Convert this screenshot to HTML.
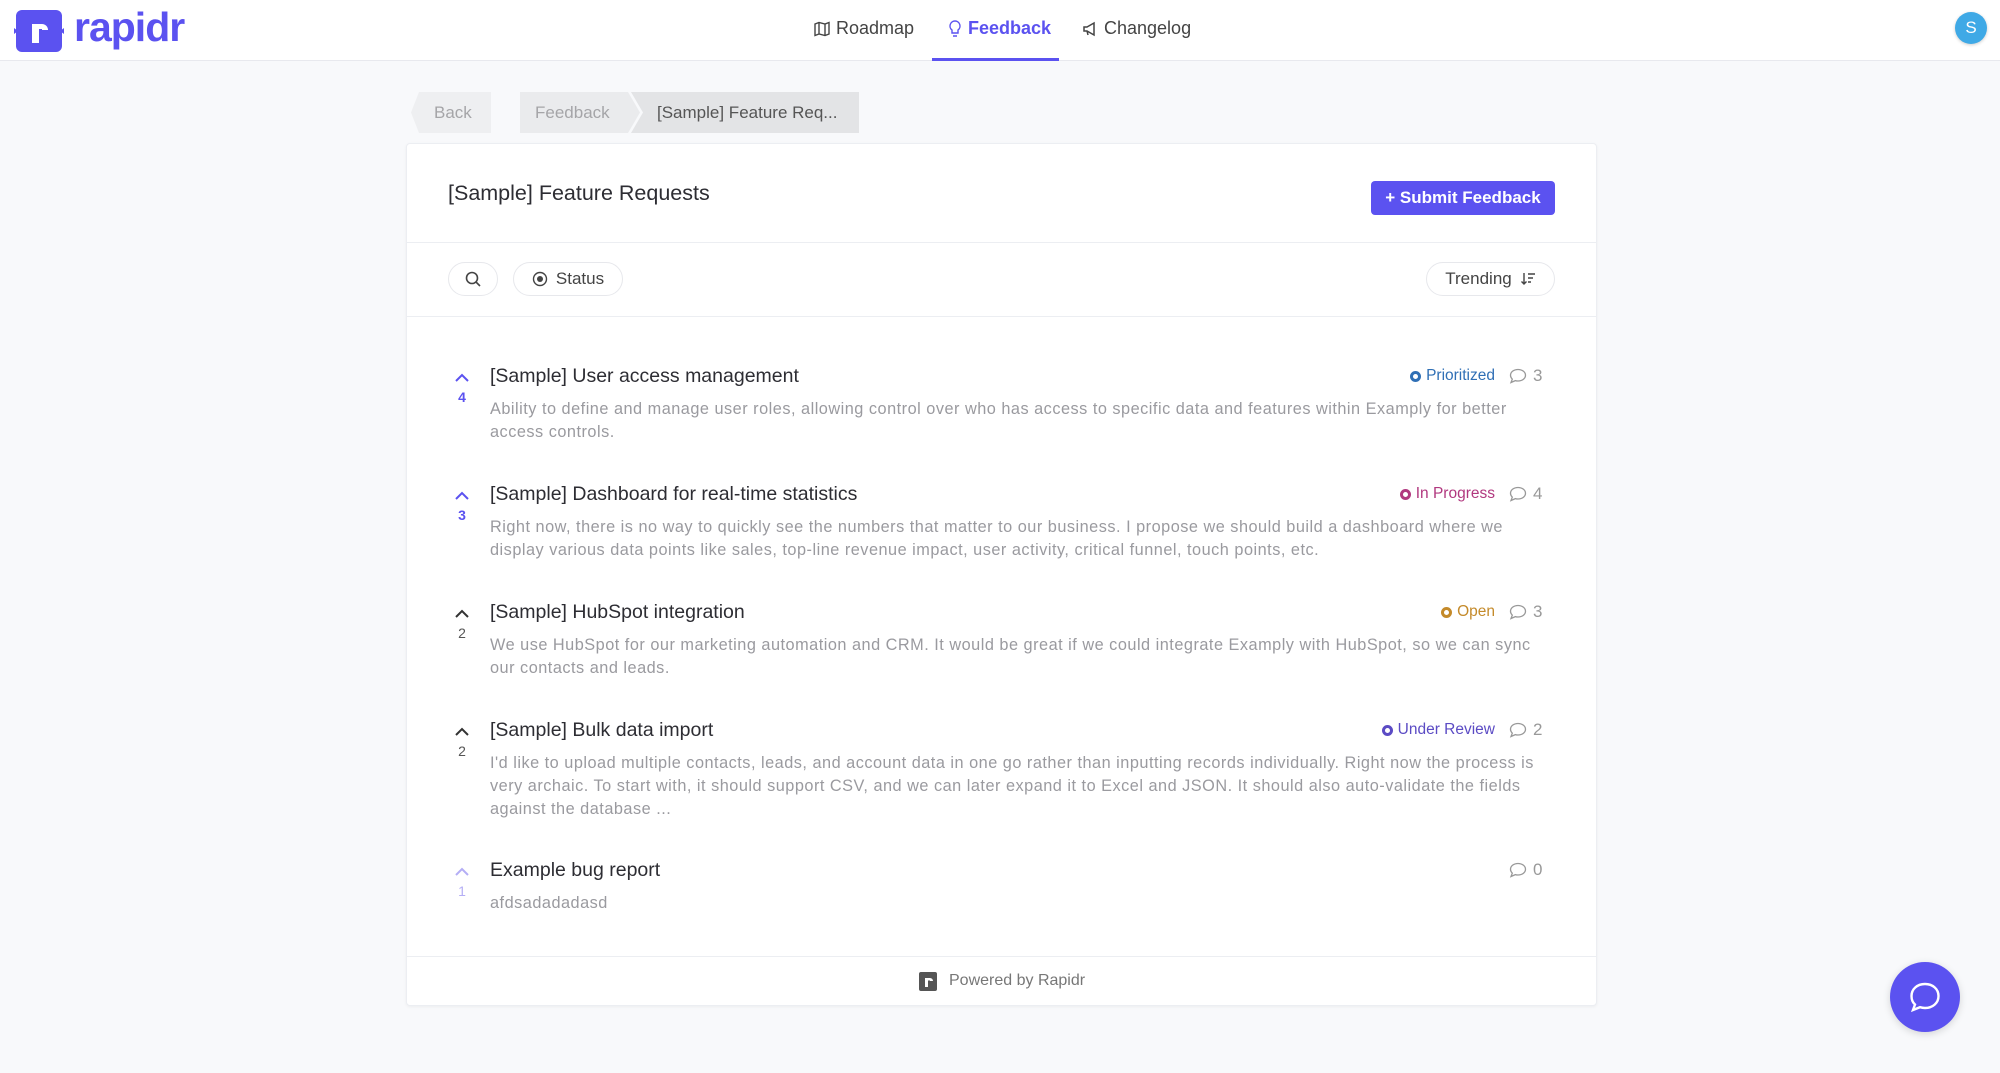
<!DOCTYPE html>
<html><head><meta charset="utf-8"><style>
*{box-sizing:border-box;margin:0;padding:0}
body{width:2000px;height:1073px;background:#f8f9fb;font-family:"Liberation Sans",sans-serif;position:relative;overflow:hidden;color:#333}
.abs{position:absolute}
.hdr{left:0;top:0;width:2000px;height:61px;background:#fff;border-bottom:1px solid #e8e9ee}
.nav{font-size:18px;color:#444;top:18px;display:flex;align-items:center;gap:6px}
.card{left:406px;top:143px;width:1191px;height:863px;background:#fff;border:1px solid #eceef2;border-radius:4px;box-shadow:0 1px 3px rgba(0,0,0,.05)}
.pill{border:1px solid #e7e8ec;border-radius:20px;height:34px;display:flex;align-items:center;justify-content:center;font-size:17px;color:#444;gap:8px}
.title{left:490px;font-size:19.5px;color:#2d2d33}
.desc{left:490px;width:1065px;font-size:16.3px;letter-spacing:.5px;line-height:23px;color:#9a9a9f}
.vote{left:450px;width:24px;text-align:center;font-size:14px;font-weight:bold}
.st{font-size:15.5px;display:flex;align-items:center;gap:5px;justify-content:flex-end;right:505px}
.st i{display:inline-block;width:11px;height:11px;border:3px solid;border-radius:50%}
.cm{left:1509px;font-size:17px;color:#999;display:flex;align-items:center;gap:6px}
</style></head><body>
<div class="abs hdr"></div>
<svg class="abs" style="left:14px;top:10px" width="50" height="42" viewBox="0 0 50 42"><rect x="2" y="0" width="46" height="42" rx="6" fill="#5b52f0"/><path d="M0 18 L4 21 L0 24Z M50 18 L46 21 L50 24Z" fill="#5b52f0"/><path d="M18 33 V14 h10 a6 6 0 0 1 6 6 h-6 v-1 h-3 v14z" fill="#fff"/></svg>
<div class="abs" style="left:74px;top:4px;font-size:41px;font-weight:bold;color:#5b52f0;letter-spacing:-1px">rapidr</div>
<div class="abs nav" style="left:814px"><svg width="16" height="16" viewBox="0 0 16 16" fill="none" stroke="#444" stroke-width="1.4"><path d="M1 3l4-1.5 6 1.5 4-1.5v11.5l-4 1.5-6-1.5-4 1.5z M5 1.5v11.5 M11 3v11.5"/></svg>Roadmap</div>
<div class="abs nav" style="left:948px;color:#5b52f0;font-weight:bold"><svg width="14" height="18" viewBox="0 0 14 18" fill="none" stroke="#5b52f0" stroke-width="1.4"><path d="M7 1a5 5 0 0 0-3 9v3h6v-3a5 5 0 0 0-3-9z M5 16h4"/></svg>Feedback</div>
<div class="abs" style="left:932px;top:58px;width:127px;height:3px;background:#5b52f0"></div>
<div class="abs nav" style="left:1082px"><svg width="16" height="16" viewBox="0 0 16 16" fill="none" stroke="#444" stroke-width="1.5"><path d="M2 6v4h3l7 4V2L5 6z M5 10l1 4"/></svg>Changelog</div>
<div class="abs" style="left:1955px;top:12px;width:32px;height:32px;border-radius:50%;background:#3fa9e6;color:#fff;font-size:17px;text-align:center;line-height:32px;box-shadow:0 1px 3px rgba(0,0,0,.2)">S</div>

<div class="abs" style="left:411px;top:92px;width:80px;height:41px;background:#eeeff1;clip-path:polygon(8px 0,100% 0,100% 100%,8px 100%,0 50%);color:#a5a5a8;font-size:17px;line-height:41px;padding-left:23px">Back</div>
<div class="abs" style="left:520px;top:92px;width:120px;height:41px;background:#eaebed;clip-path:polygon(0 0,calc(100% - 12px) 0,100% 50%,calc(100% - 12px) 100%,0 100%);color:#a5a5a8;font-size:17px;line-height:41px;padding-left:15px">Feedback</div>
<div class="abs" style="left:631px;top:92px;width:228px;height:41px;background:#e3e4e6;clip-path:polygon(0 0,100% 0,100% 100%,0 100%,12px 50%);color:#555;font-size:17px;line-height:41px;padding-left:26px">[Sample] Feature Req...</div>

<div class="abs card"></div>
<div class="abs" style="left:448px;top:181px;font-size:21.5px;color:#2d2d33">[Sample] Feature Requests</div>
<div class="abs" style="left:1371px;top:181px;width:184px;height:34px;background:#5b52f0;border-radius:4px;color:#fff;font-size:17px;font-weight:bold;line-height:34px;text-align:center">+ Submit Feedback</div>
<div class="abs" style="left:407px;top:242px;width:1189px;height:1px;background:#eceef2"></div>
<div class="abs pill" style="left:448px;top:262px;width:50px"><svg width="18" height="18" viewBox="0 0 18 18" fill="none" stroke="#444" stroke-width="1.6"><circle cx="8" cy="8" r="5.5"/><path d="M12 12l4 4"/></svg></div>
<div class="abs pill" style="left:513px;top:262px;width:110px"><svg width="16" height="16" viewBox="0 0 16 16"><circle cx="8" cy="8" r="6.5" fill="none" stroke="#444" stroke-width="1.4"/><circle cx="8" cy="8" r="3" fill="#444"/></svg>Status</div>
<div class="abs pill" style="left:1426px;top:262px;width:129px">Trending <svg width="16" height="16" viewBox="0 0 16 16" fill="none" stroke="#444" stroke-width="1.4"><path d="M4 2v11 M1.5 10.5L4 13l2.5-2.5 M8 3h7 M8 7h5 M8 11h3"/></svg></div>
<div class="abs" style="left:407px;top:316px;width:1189px;height:1px;background:#eceef2"></div>

<svg class="abs" style="left:454px;top:373px" width="16" height="10" viewBox="0 0 16 10"><path d="M2 8l6-6 6 6" fill="none" stroke="#5b52f0" stroke-width="2"/></svg>
<div class="abs vote" style="top:389px;color:#5b52f0">4</div>
<div class="abs title" style="top:365px">[Sample] User access management</div>
<div class="abs desc" style="top:398px">Ability to define and manage user roles, allowing control over who has access to specific data and features within Examply for better access controls.</div>
<div class="abs st" style="top:367px;color:#2f6fb5"><i></i>Prioritized</div>
<div class="abs cm" style="top:366px"><svg width="18" height="16" viewBox="0 0 18 16" fill="none" stroke="#999" stroke-width="1.3"><path d="M9 1.5c4.2 0 7.5 2.5 7.5 5.8S13.2 13 9 13c-.9 0-1.8-.1-2.6-.4L2 14.5l1.3-3.3C2.2 10.1 1.5 8.8 1.5 7.3 1.5 4 4.8 1.5 9 1.5z"/></svg>3</div>

<svg class="abs" style="left:454px;top:491px" width="16" height="10" viewBox="0 0 16 10"><path d="M2 8l6-6 6 6" fill="none" stroke="#5b52f0" stroke-width="2"/></svg>
<div class="abs vote" style="top:507px;color:#5b52f0">3</div>
<div class="abs title" style="top:483px">[Sample] Dashboard for real-time statistics</div>
<div class="abs desc" style="top:516px">Right now, there is no way to quickly see the numbers that matter to our business. I propose we should build a dashboard where we display various data points like sales, top-line revenue impact, user activity, critical funnel, touch points, etc.</div>
<div class="abs st" style="top:485px;color:#b1387f"><i></i>In Progress</div>
<div class="abs cm" style="top:484px"><svg width="18" height="16" viewBox="0 0 18 16" fill="none" stroke="#999" stroke-width="1.3"><path d="M9 1.5c4.2 0 7.5 2.5 7.5 5.8S13.2 13 9 13c-.9 0-1.8-.1-2.6-.4L2 14.5l1.3-3.3C2.2 10.1 1.5 8.8 1.5 7.3 1.5 4 4.8 1.5 9 1.5z"/></svg>4</div>

<svg class="abs" style="left:454px;top:609px" width="16" height="10" viewBox="0 0 16 10"><path d="M2 8l6-6 6 6" fill="none" stroke="#333" stroke-width="2"/></svg>
<div class="abs vote" style="top:625px;color:#555;font-weight:normal">2</div>
<div class="abs title" style="top:601px">[Sample] HubSpot integration</div>
<div class="abs desc" style="top:634px">We use HubSpot for our marketing automation and CRM. It would be great if we could integrate Examply with HubSpot, so we can sync our contacts and leads.</div>
<div class="abs st" style="top:603px;color:#c48a2a"><i></i>Open</div>
<div class="abs cm" style="top:602px"><svg width="18" height="16" viewBox="0 0 18 16" fill="none" stroke="#999" stroke-width="1.3"><path d="M9 1.5c4.2 0 7.5 2.5 7.5 5.8S13.2 13 9 13c-.9 0-1.8-.1-2.6-.4L2 14.5l1.3-3.3C2.2 10.1 1.5 8.8 1.5 7.3 1.5 4 4.8 1.5 9 1.5z"/></svg>3</div>

<svg class="abs" style="left:454px;top:727px" width="16" height="10" viewBox="0 0 16 10"><path d="M2 8l6-6 6 6" fill="none" stroke="#333" stroke-width="2"/></svg>
<div class="abs vote" style="top:743px;color:#555;font-weight:normal">2</div>
<div class="abs title" style="top:719px">[Sample] Bulk data import</div>
<div class="abs desc" style="top:752px">I'd like to upload multiple contacts, leads, and account data in one go rather than inputting records individually. Right now the process is very archaic. To start with, it should support CSV, and we can later expand it to Excel and JSON. It should also auto-validate the fields against the database ...</div>
<div class="abs st" style="top:721px;color:#5b4bc4"><i></i>Under Review</div>
<div class="abs cm" style="top:720px"><svg width="18" height="16" viewBox="0 0 18 16" fill="none" stroke="#999" stroke-width="1.3"><path d="M9 1.5c4.2 0 7.5 2.5 7.5 5.8S13.2 13 9 13c-.9 0-1.8-.1-2.6-.4L2 14.5l1.3-3.3C2.2 10.1 1.5 8.8 1.5 7.3 1.5 4 4.8 1.5 9 1.5z"/></svg>2</div>

<svg class="abs" style="left:454px;top:867px" width="16" height="10" viewBox="0 0 16 10"><path d="M2 8l6-6 6 6" fill="none" stroke="#b4aef5" stroke-width="2"/></svg>
<div class="abs vote" style="top:883px;color:#b4aef5;font-weight:normal">1</div>
<div class="abs title" style="top:859px">Example bug report</div>
<div class="abs desc" style="top:892px">afdsadadadasd</div>
<div class="abs cm" style="top:860px"><svg width="18" height="16" viewBox="0 0 18 16" fill="none" stroke="#999" stroke-width="1.3"><path d="M9 1.5c4.2 0 7.5 2.5 7.5 5.8S13.2 13 9 13c-.9 0-1.8-.1-2.6-.4L2 14.5l1.3-3.3C2.2 10.1 1.5 8.8 1.5 7.3 1.5 4 4.8 1.5 9 1.5z"/></svg>0</div>

<div class="abs" style="left:407px;top:956px;width:1189px;height:1px;background:#eceef2"></div>
<svg class="abs" style="left:918px;top:972px" width="20" height="19" viewBox="0 0 20 19"><rect x="1" y="0" width="18" height="19" rx="2" fill="#555"/><path d="M7 15V6h5a3 3 0 0 1 3 3h-3v-.5H10V15z" fill="#fff"/></svg>
<div class="abs" style="left:949px;top:972px;font-size:16px;color:#777">Powered by Rapidr</div>

<div class="abs" style="left:1890px;top:962px;width:70px;height:70px;border-radius:50%;background:#5b52f0;box-shadow:0 2px 8px rgba(0,0,0,.15)"></div>
<svg class="abs" style="left:1908px;top:981px" width="34" height="32" viewBox="0 0 34 32" fill="none" stroke="#fff" stroke-width="2.4"><path d="M17 3c7.7 0 13.5 5 13.5 12S24.7 27 17 27c-1.8 0-3.5-.3-5-.8L5 29l2-5.5C4.5 21.3 3.5 18.3 3.5 15 3.5 8 9.3 3 17 3z"/></svg>
</body></html>
